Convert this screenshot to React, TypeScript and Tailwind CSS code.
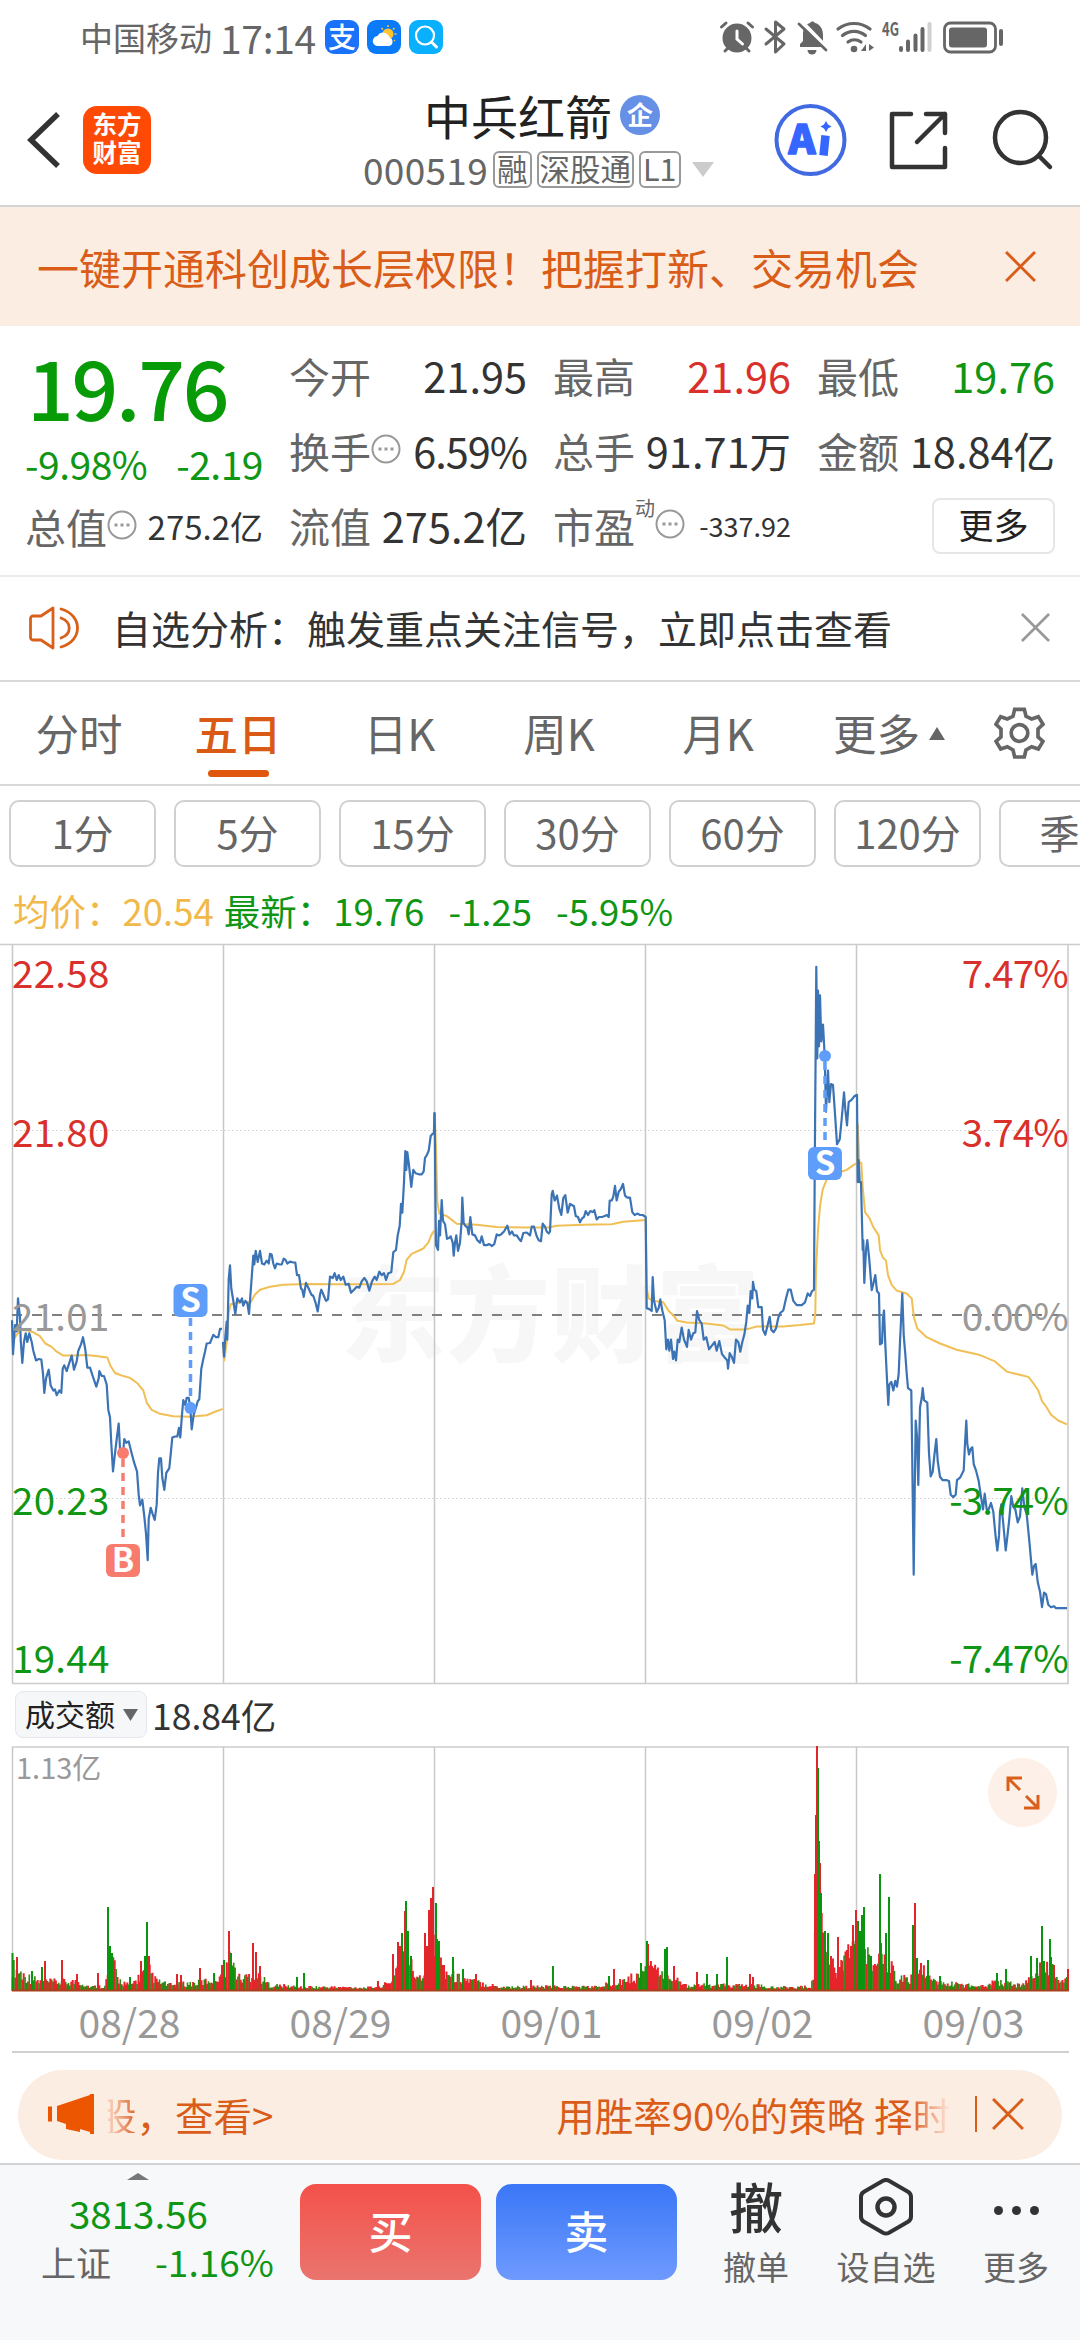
import React from 'react'

const GRID_X = [12.5, 223.5, 434.5, 645.5, 856.5, 1068]
const DAYS = ['08/28', '08/29', '09/01', '09/02', '09/03']
const PERIODS = ['1分', '5分', '15分', '30分', '60分', '120分', '季K']

type Series = { origin: number; points: string }

// Samples are kept as "x,y" pairs on a denser raster than the chart itself
const PRICE: Series[][] = [
  [
    {
      origin: 0,
      points:
        '36,805 39,875 45,815 50,828 54,760 60,800 62,845 67,893 72,850 77,832 82,850 88,832 95,850 100,868 108,888 116,885 124,886 129,915 133,955 138,925 146,907 152,940 160,950 165,948 170,960 178,950 184,955 188,905 193,898 200,910 207,895 215,878 222,907 230,890 235,868 243,855 249,840 256,865 262,903 270,903 278,920 289,942 296,925 298,910 305,920 312,920 320,938 325,990 330,1005 334,1060 339,1117 344,1085 350,1050 356,1018 360,1070 364,1085 369,1080 373,1050 379,1058 386,1055 395,1080 403,1100 411,1117 416,1165 420,1187 427,1175 433,1210 438,1245 443,1300 446,1215 452,1192 458,1205 464,1217 470,1185 474,1120 478,1090 483,1090 487,1130 493,1155 499,1120 508,1110 513,1075 517,1047 525,1045 532,1045 537,1027 541,1047 546,1000 550,970 556,980 560,965 566,965 571,985 575,1030 581,1000 588,985 593,972 598,968 604,905 610,885 615,870 620,853 630,852 640,835 648,840 655,840 660,823 666,823'
    }
  ],
  [
    {
      origin: 0,
      points:
        '669,850 672,880 676,840 680,808 682,845 686,720 690,692 694,740 700,765 706,792 712,760 720,768 726,760 730,775 736,765 742,770 747,792 752,745 757,700 760,672 763,690 767,662 773,685 780,662 786,688 793,690 800,682 806,688 810,668 815,670 820,688 825,698 830,688 840,690 845,690 851,678 856,680 862,688 870,684 880,686 886,686 891,712 897,712 903,740 907,742 911,757 918,728 925,738 934,752 940,755 947,770 953,787 960,752 964,742 970,752 978,765 984,762 990,715 998,718 1004,708 1010,722 1016,712 1022,722 1030,715 1037,732 1046,730 1053,748 1062,742 1070,736 1078,738 1085,725 1093,718 1100,725 1108,744 1116,725 1124,715 1130,722 1138,705 1145,712 1152,708 1158,722 1165,708 1174,706 1180,665 1188,660 1193,630 1199,610 1203,565 1207,583 1212,520 1216,456 1219,495 1222,458 1227,485 1234,530 1240,495 1247,502 1256,504 1265,504 1271,498 1275,470 1280,465 1286,455 1292,425 1298,420 1302,420 1303,378'
    },
    {
      origin: 430,
      points:
        '14,378 16,530 18,650 24,660 27,600 30,630 35,557 39,600 45,607 51,637 58,635 62,632 68,645 71,672 75,645 79,630 84,662 90,645 95,600 97,552 101,605 108,612 112,612 116,628 121,592 127,628 135,630 142,640 150,645 155,632 162,650 170,650 178,648 186,652 193,648 200,628 207,630 213,628 222,622 232,610 239,628 246,622 252,630 260,630 268,638 273,642 280,625 290,624 300,630 305,612 312,612 320,632 326,640 333,642 338,606 345,612 350,622 356,626 360,622 365,545 368,538 374,558 381,548 388,575 394,588 400,553 406,547 413,583 420,565 427,568 432,570 437,590 444,592 450,603 456,595 462,592 467,580 474,588 481,580 488,582 493,578 500,597 507,592 516,592 524,590 530,588 536,592 539,558 545,558 550,550 555,528 560,558 566,540 572,535 579,524 585,548 592,552 600,552 607,582 614,588 622,585 630,588 638,588 647,592 650,780 658,782 665,786 668,716 672,765 680,788 686,780 691,762 697,785 704,805 709,865 714,845 718,868 723,845 729,885 733,870 738,888 743,845 748,850 755,820 762,845 771,860 776,825 783,845 790,832 796,830 801,786 808,805 815,812 821,845 829,840 837,865 845,858 854,850 860,868 868,848 876,875 884,882 892,888 894,905 899,873 905,880 912,893 918,845 925,850 931,870 937,850 943,835 949,808 953,775 958,790 962,745 967,760'
    },
    {
      origin: 750,
      points:
        '9,726 13,742 19,745 25,778 35,778 39,825 46,835 52,818 59,798 64,825 71,830 78,822 85,800 91,790 100,785 108,760 115,742 122,742 130,765 140,774 155,774 165,768 173,750 180,755 186,745 192,742 194,500 199,76 202,265 204,125 207,240 210,135 214,230 219,195 224,260 228,375 234,290 238,355 243,318 249,320 254,370 261,442 269,432 275,390 282,335 286,370 291,403 296,355 305,350 313,343 321,340 323,520 326,475 329,520 333,520 338,660 340,640 343,728 348,660 352,640 358,680 365,743 370,730 376,712 381,745 387,750 390,855 396,852 399,800 402,785 406,855 410,915 415,980 418,938 424,932 430,950 436,930 441,942 446,915 450,850 457,750 461,835 466,875 470,915 474,945 484,950 487,1100 491,1330 494,1160 497,1012 501,1045 505,1145 510,985 515,965 518,945 522,970 532,975 537,1080 542,1127 548,1118 553,1085 559,1050 563,1095 570,1128 578,1135 590,1135 597,1137 602,1165 610,1170 617,1165 621,1135 630,1130 641,1115 645,1060 649,1012 652,1060 657,1082 662,1070 667,1067 671,1102 678,1115 686,1137 692,1165 699,1195 704,1163 710,1195 716,1195 723,1182 730,1200 736,1245 742,1280 747,1250 750,1200 754,1185 760,1225 767,1280 773,1245 778,1215 784,1168 790,1190 796,1195 803,1222 810,1210 817,1152 823,1190 830,1205 838,1260 847,1330 852,1312 857,1308 863,1345 870,1365 876,1397 882,1367 888,1370 895,1392 903,1397 912,1395 918,1399 951,1399'
    }
  ]
]

const AVERAGE: Series[][] = [
  [
    {
      origin: 0,
      points:
        '36,850 50,835 62,825 80,826 100,830 120,838 136,853 155,860 170,870 190,878 222,878 260,877 300,880 322,882 332,900 345,914 365,919 390,924 412,935 430,950 440,975 455,990 480,998 520,1003 570,1004 620,1001 645,994 668,988'
    }
  ],
  [
    {
      origin: 0,
      points:
        '669,850 673,888 680,850 686,790 692,772 720,768 752,768 765,752 780,742 810,736 850,732 920,730 1000,731 1100,731 1180,730 1200,722 1212,705 1220,680 1235,668 1270,657 1285,645 1295,628 1303,620'
    }
  ],
  [
    {
      origin: 430,
      points:
        '14,378 18,450 22,560 28,585 50,590 65,598 80,606 140,608 200,613 300,614 355,614 380,610 460,608 545,607 580,602 647,598 650,740 656,760 670,765 700,768 715,785 730,795 742,806 770,810 830,812 880,816 900,824 940,824'
    },
    {
      origin: 750,
      points:
        '0,822 20,818 100,818 150,815 192,812 196,790 198,700 204,620 210,570 218,535 232,512 260,502 290,495 310,485 321,481 323,400 328,480 334,480 338,530 345,582 358,594 370,613 386,630 390,660 398,675 408,682 414,712 425,732 440,744 470,750 485,760 492,800 502,822 530,840 570,853 620,866 690,877 735,890 770,911 835,922 850,935 865,950 876,972 890,985 903,1000 925,1012 951,1020'
    }
  ]
]

const toPolyline = (series: Series[]) =>
  series
    .flatMap(({ origin, points }) =>
      points.split(' ').map((pair) => {
        const [x, y] = pair.split(',').map(Number)
        return `${(origin + x / 3).toFixed(1)},${(y / 2.063 - 13).toFixed(1)}`
      })
    )
    .join(' ')

const AXIS = [
  { y: 45, price: '22.58', rate: '7.47%', color: '#d9302c' },
  { y: 204, price: '21.80', rate: '3.74%', color: '#d9302c' },
  { y: 388, price: '21.01', rate: '0.00%', color: '#999999' },
  { y: 572, price: '20.23', rate: '-3.74%', color: '#0f9614' },
  { y: 730, price: '19.44', rate: '-7.47%', color: '#0f9614' }
]

const MARKERS = [
  { label: 'S', x: 190.5, dot: 465, box: 341, from: 375, to: 461, color: '#5f9dfb' },
  { label: 'B', x: 123, dot: 510, box: 601, from: 516, to: 600, color: '#f77c6d' },
  { label: 'S', x: 825, dot: 113, box: 204, from: 119, to: 203, color: '#5f9dfb' }
]

// [x, typical height] of the trading volume through the five days
const VOLUME_LEVELS = [
  [12, 30], [25, 18], [40, 11], [80, 11], [90, 5], [105, 6], [112, 38], [118, 14], [130, 6], [142, 20],
  [150, 24], [156, 12], [170, 7], [200, 10], [215, 15], [224, 24], [230, 38], [240, 14], [252, 20], [260, 17],
  [270, 7], [300, 5], [370, 4], [390, 9], [396, 28], [407, 48], [414, 20], [424, 20], [430, 55], [436, 52],
  [443, 26], [455, 17], [475, 11], [500, 5], [600, 5], [612, 10], [640, 18], [650, 32], [660, 18], [670, 18],
  [685, 7], [710, 7], [760, 6], [770, 4], [810, 5], [814, 14], [816, 150], [819, 150], [822, 65], [828, 50],
  [834, 25], [845, 35], [855, 60], [865, 50], [870, 33], [890, 33], [896, 17], [910, 13], [916, 30], [925, 22],
  [935, 10], [980, 6], [997, 11], [1020, 7], [1030, 13], [1040, 26], [1052, 26], [1060, 12], [1068, 15]
]

const RED_PEAKS = [
  [17, 34], [45, 30], [62, 31], [77, 17], [98, 18], [114, 28], [141, 30], [149, 35], [177, 17], [181, 16],
  [200, 23], [222, 26], [229, 60], [253, 48], [256, 39], [260, 25], [378, 10], [393, 37], [398, 49], [400, 45],
  [405, 80], [425, 58], [427, 45], [429, 81], [431, 93], [433, 104], [444, 26], [476, 17], [531, 11], [614, 22],
  [648, 47], [652, 25], [674, 25], [697, 19], [750, 17], [753, 14], [815, 117], [816, 176], [817, 245], [820, 128],
  [831, 35], [838, 54], [842, 30], [848, 38], [851, 45], [853, 66], [856, 81], [881, 48], [915, 88], [921, 28],
  [1051, 34], [1054, 26], [1068, 22]
]

const GREEN_PEAKS = [
  [12.5, 38], [32, 20], [42, 24], [108, 84], [110, 45], [112, 38], [130, 14], [145, 35], [147, 69], [214, 18],
  [224, 31], [231, 38], [233, 25], [297, 14], [304, 18], [402, 58], [406, 90], [408, 60], [411, 35], [436, 88],
  [437, 52], [439, 50], [453, 34], [463, 22], [553, 25], [609, 15], [641, 28], [647, 50], [665, 42], [667, 44],
  [707, 17], [717, 17], [727, 34], [818, 223], [819, 150], [821, 98], [825, 60], [828, 58], [858, 70], [860, 60],
  [862, 76], [864, 84], [871, 35], [880, 117], [886, 58], [889, 94], [913, 66], [917, 33], [928, 31], [940, 15],
  [997, 18], [1006, 22], [1031, 35], [1037, 33], [1042, 65], [1044, 30], [1050, 52]
]

const levelAt = (x: number) => {
  const i = Math.max(1, VOLUME_LEVELS.findIndex(([px]) => px >= x))
  const [x0, h0] = VOLUME_LEVELS[i - 1]
  const [x1, h1] = VOLUME_LEVELS[i]
  return h0 + ((h1 - h0) * (x - x0)) / (x1 - x0)
}

const VOLUME_BARS = Array.from({ length: 754 }, (_, i) => {
  const x = 12.5 + i * 1.4
  const noise = Math.abs(Math.sin(i * 12.9898) * 43758.5453) % 1
  const tint = Math.abs(Math.sin(i * 78.233) * 12543.123) % 1
  return { x, h: Math.max(2.5, levelAt(x) * (0.45 + noise * 0.7)), red: tint > 0.42 }
})

const bar = (x: number, h: number) => `M${x.toFixed(1)} 245v${(-h).toFixed(1)}`

const Triangle: React.FC<{ className: string; up?: boolean }> = ({ className, up }) => (
  <svg viewBox="0 0 20 12" preserveAspectRatio="none" className={className}>
    <path d={up ? 'M10 0l10 12H0z' : 'M0 0h20L10 12z'} fill="currentColor" />
  </svg>
)

const Close: React.FC<{ className: string }> = ({ className }) => (
  <svg viewBox="0 0 30 30" className={className}>
    <path d="M1 1l28 28M29 1L1 29" stroke="currentColor" strokeWidth="2.8" />
  </svg>
)

const Info: React.FC = () => (
  <svg viewBox="0 0 30 30" className="mb-1 h-[30px] w-[30px] shrink-0">
    <circle cx="15" cy="15" r="13.5" fill="none" stroke="#999" strokeWidth="2" />
    <path d="M7.5 15h3m3 0h3m3 0h3" stroke="#999" strokeWidth="3" />
  </svg>
)

const StatusBar: React.FC = () => (
  <div className="flex h-[74px] items-center pr-[72px] pl-[80px] text-[#666]">
    <span className="text-[33px]">中国移动</span>
    <span className="ml-[8px] text-[39px] tracking-[-0.3px]">17:14</span>
    <div className="ml-[9px] flex gap-2">
      <div className="flex size-[34px] items-center justify-center rounded-[9px] bg-[#1a72fb] pb-0.5 text-[28px] font-medium text-white">
        支
      </div>
      <svg viewBox="0 0 34 34" className="size-[34px] rounded-[9px] bg-[#0a7bf8]">
        <circle cx="21" cy="14" r="5.5" fill="#ffc531" />
        <path d="M21 5v2M14.5 8l1.5 1.500M27.500 8L26 9.500M29.500 14h-2M27 20l1 1" stroke="#ffc531" strokeWidth="1.500" />
        <path d="M11 26a5 5 0 01-.5-10 6.500 6.500 0 0112 1.500A4.400 4.400 0 0122 26z" fill="#fff" />
      </svg>
      <svg viewBox="0 0 34 34" className="size-[34px] rounded-[9px] bg-[#08b0fd]" fill="none" stroke="#fff">
        <circle cx="16" cy="15.500" r="9" strokeWidth="2.200" />
        <path d="M22.500 22l5 5" strokeWidth="3" strokeLinecap="round" />
      </svg>
    </div>
    <svg viewBox="716 16 290 40" className="ml-auto h-10 w-[290px] shrink-0" fill="none" stroke="#666">
      <circle cx="735" cy="37" r="14.500" fill="#666" stroke="none" />
      <path d="M719.500 26l4.500-4M750.500 26l-4.500-4M723 50l3-3M747 50l-3-3" strokeWidth="3" strokeLinecap="round" />
      <path d="M735 30v8l5.500 5" stroke="#fff" strokeWidth="3" strokeLinecap="round" />
      <path d="M764 28l18 15-8.500 8V21l8.500 7-18 15" strokeWidth="3" strokeLinejoin="round" strokeLinecap="round" />
      <path d="M798 46v-3l3-3v-7c0-6 3-10 7-11 1-2 4-2 5 0 5 1 8 6 8 12v7l3 3v2z" fill="#666" stroke="none" />
      <path d="M805.500 49h9a4.500 4.500 0 01-9 0z" fill="#666" stroke="none" />
      <path d="M799 20l27 28" stroke="#fff" strokeWidth="4" />
      <path d="M797 23l27 26" strokeWidth="2.800" strokeLinecap="round" />
      <path d="M836 28a26 26 0 0132 0M840.500 34.500a18 18 0 0123 0M846 41a11 11 0 0113 0" strokeWidth="3.200" strokeLinecap="round" />
      <circle cx="852" cy="48" r="3.300" fill="#666" stroke="none" />
      <path d="M864 43v7h-5zM867 43v7l5-3.500z" fill="#666" stroke="none" />
      <text x="880" y="35" fontSize="19" fontWeight="700" textLength="17" lengthAdjust="spacingAndGlyphs" fill="#666" stroke="none">
        4G
      </text>
      <path d="M899 47v2M906 40.500v8.500M913.500 34.500V49M920.500 28v21" strokeWidth="4" strokeLinecap="round" />
      <path d="M927.500 23v26" stroke="#d0d0d0" strokeWidth="4" strokeLinecap="round" />
      <rect x="942.500" y="22" width="51" height="29" rx="6" strokeWidth="2.800" />
      <rect x="947" y="26.500" width="38" height="20" rx="3" fill="#666" stroke="none" />
      <path d="M999 30v13" strokeWidth="4" strokeLinecap="round" />
    </svg>
  </div>
)

const Header: React.FC = () => (
  <div className="flex h-[133px] items-center border-b-2 border-[#d4d4d4] pr-[24px] pl-[27px]">
    <svg viewBox="0 0 34 56" className="h-14 w-[34px]">
      <path d="M31 2L4 28l27 26" fill="none" stroke="#333" strokeWidth="5.500" />
    </svg>
    <div className="ml-[22px] flex h-[68px] w-[68px] flex-col items-center justify-center rounded-[14px] bg-[#ff4a05] pb-1 text-[24.500px] leading-[28px] font-bold text-white">
      <span>东方</span>
      <span>财富</span>
    </div>
    <div className="ml-[212px] w-[352px] shrink-0 whitespace-nowrap">
      <div className="ml-[61px] flex items-center">
        <span className="text-[47px] text-[#222]">中兵红箭</span>
        <span className="ml-[8px] flex size-10 items-center justify-center rounded-full bg-[#6590e6] pb-0.5 text-[26px] font-bold text-white">
          企
        </span>
      </div>
      <div className="mt-[13px] flex items-center gap-[5px] text-[30.500px] text-[#666]">
        <span className="w-[125px] text-[37px] tracking-[0.3px]">000519</span>
        <span className="flex h-[37px] items-center rounded-md border-2 border-[#999] px-[2px] pb-0.5">融</span>
        <span className="flex h-[37px] items-center rounded-md border-2 border-[#999] px-[1px] pb-0.5">深股通</span>
        <span className="flex h-[37px] items-center rounded-md border-2 border-[#999] px-[2px] pb-0.5">L1</span>
        <Triangle className="ml-1.5 h-[15px] w-[22px] text-[#ccc]" />
      </div>
    </div>
    <svg viewBox="772 102 282 74" className="ml-auto h-[74px] w-[282px] shrink-0" fill="none" strokeLinecap="round" strokeLinejoin="round">
      <circle cx="808.500" cy="139" r="34" stroke="#4169e1" strokeWidth="4" />
      <text x="786.500" y="152.500" fontSize="40" fontWeight="900" textLength="27" lengthAdjust="spacingAndGlyphs" fill="#3566ff" stroke="#3566ff" strokeWidth="1.500">
        A
      </text>
      <path d="M823.500 134.500l-2 20" stroke="#3566ff" strokeWidth="8.500" strokeLinecap="butt" />
      <path d="M824 120l2 3.500 3.500 2-3.500 2-2 3.500-2-3.500-3.500-2 3.500-2z" fill="#3566ff" />
      <path d="M909 113h-19v53h53v-19M924 113h19v19M943 113l-28 28" stroke="#333" strokeWidth="4.500" />
      <circle cx="1018.500" cy="136.500" r="25.500" stroke="#333" strokeWidth="4.500" />
      <path d="M1037 155l11 11" stroke="#333" strokeWidth="4.500" />
    </svg>
  </div>
)

type StatProps = { label: string; value: string; info?: boolean; className?: string }

const Stat: React.FC<StatProps> = ({ label, value, info, className = 'text-[#333]' }) => (
  <div className="flex w-[238px] items-center">
    <span className="text-[41px] text-[#666]">{label}</span>
    {info && <Info />}
    <span className={`ml-auto text-[41.500px] ${className}`}>{value}</span>
  </div>
)

const Quote: React.FC = () => (
  <div className="flex h-[251px] border-b-2 border-[#ebebeb] pl-[25px]">
    <div className="w-[238px] shrink-0 pt-[19px]">
      <div className="h-[84px] pl-[2px] text-[82px] font-medium tracking-[-2.200px] text-[#079c07]">19.76</div>
      <div className="mt-[15px] flex justify-between text-[39px] tracking-[-0.500px] text-[#0f9614]">
        <span>-9.98%</span>
        <span>-2.19</span>
      </div>
      <div className="mt-[23px] flex items-center">
        <span className="text-[41px] text-[#666]">总值</span>
        <Info />
        <span className="ml-auto text-[33px] text-[#333]">275.2亿</span>
      </div>
    </div>
    <div className="ml-[26px] flex flex-col gap-[33.500px] pt-[29px]">
      <div className="flex gap-[26px]">
        <Stat label="今开" value="21.95" />
        <Stat label="最高" value="21.96" className="text-[#d9302c]" />
        <Stat label="最低" value="19.76" className="text-[#0f9614]" />
      </div>
      <div className="flex gap-[26px]">
        <Stat label="换手" value="6.59%" info className="tracking-[-1px] text-[#333]" />
        <Stat label="总手" value="91.71万" />
        <Stat label="金额" value="18.84亿" />
      </div>
      <div className="flex h-[41px] items-center gap-[26px]">
        <Stat label="流值" value="275.2亿" />
        <div className="flex w-[238px] items-center">
          <span className="text-[41px] text-[#666]">市盈</span>
          <span className="mb-9 text-[20px] text-[#666]">动</span>
          <Info />
          <span className="ml-auto text-[27px] text-[#333]">-337.92</span>
        </div>
        <button className="ml-[115px] h-[56px] w-[123px] shrink-0 rounded-lg border-2 border-[#e6e6e6] pb-1 text-[35px] text-[#222]">
          更多
        </button>
      </div>
    </div>
  </div>
)

const Tabs: React.FC = () => (
  <div className="flex h-[104px] items-center border-b-2 border-[#d9d9d9] text-[43.500px] text-[#666]">
    <span className="w-[158px] text-center">分时</span>
    <div className="relative w-[160px] text-center font-medium text-[#d95a14]">
      五日
      <div className="absolute top-[59px] left-[50px] h-[7px] w-[61px] rounded-full bg-[#e0560c]" />
    </div>
    <span className="w-[163px] text-center">日K</span>
    <span className="w-[156px] text-center">周K</span>
    <span className="w-[162px] text-center">月K</span>
    <span className="ml-[34px]">更多</span>
    <Triangle up className="ml-[9px] h-[13px] w-4" />
    <svg viewBox="99 52 153 156" className="ml-[49px] h-[52px] w-[51px]" fill="none" stroke="#666" strokeWidth="11">
      <path d="M161 59h29l5 21 17 8 20-7 14 23-15 14v24l15 13-14 23-20-7-17 10-5 21h-29l-5-21-17-10-20 7-14-23 15-13v-24l-15-14 14-23 20 7 17-8z" />
      <circle cx="175.500" cy="130" r="25" />
    </svg>
  </div>
)

const PriceChart: React.FC = () => (
  <svg viewBox="0 0 1080 742" className="block h-[742px] w-full" fill="none">
    <text x="341" y="411" fontSize="104" fontWeight="900" letterSpacing="1" fill="#f7f7f7">
      东方财富
    </text>
    <path d="M0 1.500h1080M12 740.500h1057" stroke="#ccc" strokeWidth="1.500" />
    {GRID_X.map((x) => (
      <path key={x} d={`M${x} 2v738`} stroke="#c8c8c8" strokeWidth="1.500" />
    ))}
    <path d="M12 187.500h1056M12 555.500h1056" stroke="#ccc" strokeDasharray="1.500 2.500" />
    <path d="M12 372h1056" stroke="#808080" strokeWidth="2" strokeDasharray="10 10" />
    {AVERAGE.map((series, i) => (
      <polyline key={i} points={toPolyline(series)} stroke="#f0bf55" strokeWidth="2" strokeLinejoin="round" />
    ))}
    {PRICE.map((series, i) => (
      <polyline key={i} points={toPolyline(series)} stroke="#3b73b5" strokeWidth="2.200" strokeLinejoin="round" />
    ))}
    {AXIS.map(({ y, price, rate, color }) => (
      <g key={y} fontSize="38.500" fill={color}>
        <text x="12" y={y} letterSpacing="0.300">
          {price}
        </text>
        <text x="1068" y={y} textAnchor="end" letterSpacing="-0.800">
          {rate}
        </text>
      </g>
    ))}
    {MARKERS.map(({ label, x, dot, box, from, to, color }) => (
      <g key={x}>
        <path d={`M${x} ${from}V${to}`} stroke={color} strokeWidth="3.500" strokeDasharray="8 6" />
        <circle cx={x} cy={dot} r="6" fill={color} />
        <rect x={x - 17} y={box} width="34" height="33" rx="6" fill={color} />
        <text x={x} y={box + 28} fontSize="33" fontWeight="700" textAnchor="middle" fill="#fff">
          {label}
        </text>
      </g>
    ))}
  </svg>
)

const VolumeChart: React.FC = () => (
  <div className="relative h-[247px]">
    <svg viewBox="0 0 1080 247" className="block h-[247px] w-full" fill="none">
      <path d="M12 1h1057" stroke="#ccc" strokeWidth="1.500" />
      {GRID_X.map((x) => (
        <path key={x} d={`M${x} 1v244`} stroke="#c8c8c8" strokeWidth="1.500" />
      ))}
      <path d={VOLUME_BARS.filter((b) => b.red).map((b) => bar(b.x, b.h)).join('')} stroke="#e8232a" strokeWidth="2" />
      <path d={VOLUME_BARS.filter((b) => !b.red).map((b) => bar(b.x, b.h)).join('')} stroke="#2d8a10" strokeWidth="1.600" />
      <path d={RED_PEAKS.map(([x, h]) => bar(x, h)).join('')} stroke="#e0262a" strokeWidth="2" />
      <path d={GREEN_PEAKS.map(([x, h]) => bar(x, h)).join('')} stroke="#0a9410" strokeWidth="2" />
      <path d="M12 244.500h1057" stroke="#a8401a" strokeWidth="2" />
      <text x="16" y="33" fontSize="29" fill="#999">
        1.13亿
      </text>
    </svg>
    <div className="absolute top-[12px] right-[23px] flex size-[69px] items-center justify-center rounded-full bg-[#fdf0e8]">
      <svg viewBox="0 0 34 34" className="size-[34px]" fill="none" stroke="#d9601a" strokeWidth="3">
        <path d="M2 15V2h14M3 3l11 11M32 19v13H18M31 31L20 20" />
      </svg>
    </div>
  </div>
)

const Ticker: React.FC = () => (
  <div className="mx-[18px] mt-[17px] flex h-[90px] items-center rounded-full bg-[#fcede3] pr-[38px] pb-0.5 pl-[30px] text-[38.500px] text-[#d95d18]">
    <svg viewBox="0 0 46 40" className="h-10 w-[46px] shrink-0 text-[#ec5600]" fill="currentColor">
      <path d="M0 12.500h4v15H0zM9 12L42 1v-1h4v40h-4v-2l-10-3v3l-14-3v-5l-9-3z" />
    </svg>
    <div className="ml-[14px] flex w-[852px] items-center overflow-hidden py-1 whitespace-nowrap">
      <span className="-ml-[10px] bg-gradient-to-r from-transparent via-[#f0b493] to-[#d95d18] bg-clip-text text-transparent">股</span>
      <span>，查看&gt;</span>
      <span className="ml-auto">用胜率90%的策略&nbsp;择</span>
      <span className="mr-[9px] bg-gradient-to-r from-[#d95d18] to-[#fcede3] bg-clip-text text-transparent">时</span>
    </div>
    <div className="ml-auto h-9 w-[2px] bg-[#d95d18]" />
    <Close className="ml-[15px] size-8" />
  </div>
)

const BottomBar: React.FC = () => (
  <div className="mt-[3px] flex h-[178px] border-t-2 border-[#d0d3d6] bg-[#f7f8fa] pt-[8px]">
    <div className="flex w-[300px] flex-col">
      <Triangle up className="ml-[127px] h-[7px] w-[22px] text-[#777]" />
      <span className="mt-[13px] ml-[69px] text-[38.500px] text-[#0f9614]">3813.56</span>
      <div className="mt-[11px] flex items-center pl-[41px]">
        <span className="text-[35px] text-[#666]">上证</span>
        <span className="ml-[44px] text-[37px] text-[#0f9614]">-1.16%</span>
      </div>
    </div>
    <button className="mt-[11px] h-[96px] w-[181px] rounded-[16px] bg-gradient-to-b from-[#f4504a] to-[#e9746e] pb-1 text-[44px] font-medium text-white">
      买
    </button>
    <button className="mt-[11px] ml-[15px] h-[96px] w-[181px] rounded-[16px] bg-gradient-to-b from-[#3a76f7] to-[#6e9afe] pb-1 text-[44px] font-medium text-white">
      卖
    </button>
    <div className="ml-[34px] flex w-[90px] flex-col items-center text-[33px] text-[#666]">
      <span className="mt-[6px] text-[54px] font-medium text-[#333]">撤</span>
      <span className="mt-[17px]">撤单</span>
    </div>
    <div className="ml-[32px] flex w-[106px] flex-col items-center text-[33px] text-[#666]">
      <svg viewBox="0 0 54 58" className="mt-[5px] h-[58px] w-[54px]" fill="none" stroke="#333" strokeWidth="4">
        <path d="M24 2.800q3-1.600 6 0l19 11q3 1.800 3 5v20q0 3.200-3 5l-19 11q-3 1.600-6 0l-19-11q-3-1.800-3-5v-20q0-3.200 3-5z" />
        <circle cx="27" cy="29" r="8.500" strokeWidth="4.500" />
      </svg>
      <span className="mt-[14px]">设自选</span>
    </div>
    <div className="ml-[31px] flex w-[92px] flex-col items-center text-[33px] text-[#666]">
      <div className="mt-[33px] flex gap-[9px]">
        <div className="size-[9px] rounded-full bg-[#333]" />
        <div className="size-[9px] rounded-full bg-[#333]" />
        <div className="size-[9px] rounded-full bg-[#333]" />
      </div>
      <span className="mt-[35px]">更多</span>
    </div>
  </div>
)

const App: React.FC = () => {
  return (
    <div className="h-[2340px] w-[1080px] overflow-hidden bg-white font-['Noto_Sans_CJK_SC',sans-serif] leading-none">
      <StatusBar />
      <Header />

      {/* Promo banner */}
      <div className="flex h-[119px] items-center justify-between bg-[#fcede3] pr-[44px] pl-[37px] text-[42px] text-[#d95d18]">
        <span>一键开通科创成长层权限！把握打新、交易机会</span>
        <Close className="size-[31px]" />
      </div>

      <Quote />

      {/* Watchlist signal */}
      <div className="flex h-[105px] items-center border-b-2 border-[#d9d9d9] pr-[30px] pb-0.5 pl-[29px] text-[39px] text-[#333]">
        <svg viewBox="0 0 52 44" className="h-11 w-[52px]" fill="none" stroke="#d9601a" strokeWidth="2.800" strokeLinejoin="round" strokeLinecap="round">
          <path d="M12 10L24 2v40l-12-8H4a2.500 2.500 0 01-2.500-2.500v-19A2.500 2.500 0 014 10zM32 3c22 6 22 32 0 38M32 12c11 4 11 16 0 20" />
        </svg>
        <span className="ml-[31px]">自选分析：触发重点关注信号，立即点击查看</span>
        <Close className="ml-auto size-[29px] text-[#999]" />
      </div>

      <Tabs />

      {/* Minute periods */}
      <div className="flex h-[82px] gap-[18px] overflow-hidden pt-[14px] pl-[9px] text-[40px] text-[#666]">
        {PERIODS.map((period) => (
          <button key={period} className="h-[67px] w-[147px] shrink-0 rounded-[10px] border-2 border-[#d0d0d0] pb-1">
            {period}
          </button>
        ))}
      </div>

      {/* Legend */}
      <div className="flex h-[75px] items-center pt-[11px] pl-[13px] text-[36.500px] text-[#0f9614]">
        <span className="text-[#f0b94a]">均价：20.54</span>
        <span className="ml-[10px]">最新：19.76</span>
        <span className="ml-[24px]">-1.25</span>
        <span className="ml-[24px]">-5.95%</span>
      </div>

      <PriceChart />

      {/* Indicator picker */}
      <div className="flex h-[61px] items-center pb-[2px] pl-[15px] text-[#333]">
        <div className="flex h-[47px] w-[132px] items-center rounded-lg border border-[#e4e7eb] bg-[#f6f7f9] pb-1 pl-[9px] text-[30px] text-[#222]">
          成交额
          <Triangle className="mt-1 ml-[8px] h-3 w-[15px] text-[#666]" />
        </div>
        <span className="ml-[5px] text-[35.500px]">18.84亿</span>
      </div>

      <VolumeChart />

      {/* Dates */}
      <div className="mr-[11px] ml-3 flex h-[60px] items-center border-b-2 border-[#d0d0d0] pb-0.5 pl-3 text-[39px] text-[#999]">
        {DAYS.map((day) => (
          <span key={day} className="w-[211px] shrink-0 text-center">
            {day}
          </span>
        ))}
      </div>

      <Ticker />
      <BottomBar />
    </div>
  )
}

export default App
